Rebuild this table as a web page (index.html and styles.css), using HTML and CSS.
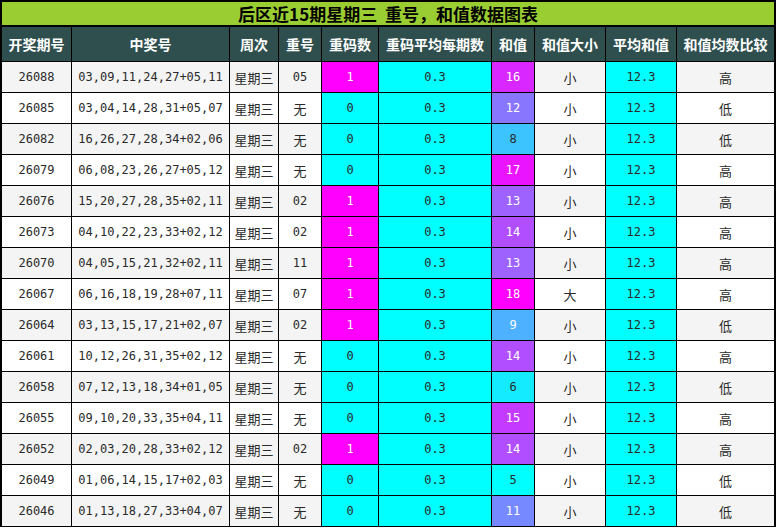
FILE: index.html
```html
<!DOCTYPE html>
<html lang="zh">
<head>
<meta charset="utf-8">
<title>后区近15期星期三 重号，和值数据图表</title>
<link rel="stylesheet" href="styles.css">
</head>
<body>
<div class="sheet">
  <div class="title">后区近15期星期三&nbsp;&nbsp;重号，和值数据图表</div>
  <div class="th">开奖期号</div><div class="th">中奖号</div><div class="th">周次</div><div class="th">重号</div><div class="th">重码数</div><div class="th">重码平均每期数</div><div class="th">和值</div><div class="th">和值大小</div><div class="th">平均和值</div><div class="th">和值均数比较</div>

  <div class="td num g">26088</div><div class="td num g">03,09,11,24,27+05,11</div><div class="td cjk g">星期三</div><div class="td num g">05</div><div class="td num mag">1</div><div class="td num cyan">0.3</div><div class="td num lt" style="background:#d827ff">16</div><div class="td cjk g">小</div><div class="td num cyan">12.3</div><div class="td cjk g">高</div>

  <div class="td num">26085</div><div class="td num">03,04,14,28,31+05,07</div><div class="td cjk">星期三</div><div class="td cjk">无</div><div class="td num cyan">0</div><div class="td num cyan">0.3</div><div class="td num lt" style="background:#8976ff">12</div><div class="td cjk">小</div><div class="td num cyan">12.3</div><div class="td cjk">低</div>

  <div class="td num g">26082</div><div class="td num g">16,26,27,28,34+02,06</div><div class="td cjk g">星期三</div><div class="td cjk g">无</div><div class="td num cyan">0</div><div class="td num cyan">0.3</div><div class="td num" style="background:#3bc4ff">8</div><div class="td cjk g">小</div><div class="td num cyan">12.3</div><div class="td cjk g">低</div>

  <div class="td num">26079</div><div class="td num">06,08,23,26,27+05,12</div><div class="td cjk">星期三</div><div class="td cjk">无</div><div class="td num cyan">0</div><div class="td num cyan">0.3</div><div class="td num lt" style="background:#eb14ff">17</div><div class="td cjk">小</div><div class="td num cyan">12.3</div><div class="td cjk">高</div>

  <div class="td num g">26076</div><div class="td num g">15,20,27,28,35+02,11</div><div class="td cjk g">星期三</div><div class="td num g">02</div><div class="td num mag">1</div><div class="td num cyan">0.3</div><div class="td num lt" style="background:#9d62ff">13</div><div class="td cjk g">小</div><div class="td num cyan">12.3</div><div class="td cjk g">高</div>

  <div class="td num">26073</div><div class="td num">04,10,22,23,33+02,12</div><div class="td cjk">星期三</div><div class="td num">02</div><div class="td num mag">1</div><div class="td num cyan">0.3</div><div class="td num lt" style="background:#b14eff">14</div><div class="td cjk">小</div><div class="td num cyan">12.3</div><div class="td cjk">高</div>

  <div class="td num g">26070</div><div class="td num g">04,05,15,21,32+02,11</div><div class="td cjk g">星期三</div><div class="td num g">11</div><div class="td num mag">1</div><div class="td num cyan">0.3</div><div class="td num lt" style="background:#9d62ff">13</div><div class="td cjk g">小</div><div class="td num cyan">12.3</div><div class="td cjk g">高</div>

  <div class="td num">26067</div><div class="td num">06,16,18,19,28+07,11</div><div class="td cjk">星期三</div><div class="td num">07</div><div class="td num mag">1</div><div class="td num cyan">0.3</div><div class="td num lt" style="background:#ff00ff">18</div><div class="td cjk">大</div><div class="td num cyan">12.3</div><div class="td cjk">高</div>

  <div class="td num g">26064</div><div class="td num g">03,13,15,17,21+02,07</div><div class="td cjk g">星期三</div><div class="td num g">02</div><div class="td num mag">1</div><div class="td num cyan">0.3</div><div class="td num lt" style="background:#4eb1ff">9</div><div class="td cjk g">小</div><div class="td num cyan">12.3</div><div class="td cjk g">低</div>

  <div class="td num">26061</div><div class="td num">10,12,26,31,35+02,12</div><div class="td cjk">星期三</div><div class="td cjk">无</div><div class="td num cyan">0</div><div class="td num cyan">0.3</div><div class="td num lt" style="background:#b14eff">14</div><div class="td cjk">小</div><div class="td num cyan">12.3</div><div class="td cjk">高</div>

  <div class="td num g">26058</div><div class="td num g">07,12,13,18,34+01,05</div><div class="td cjk g">星期三</div><div class="td cjk g">无</div><div class="td num cyan">0</div><div class="td num cyan">0.3</div><div class="td num" style="background:#14ebff">6</div><div class="td cjk g">小</div><div class="td num cyan">12.3</div><div class="td cjk g">低</div>

  <div class="td num">26055</div><div class="td num">09,10,20,33,35+04,11</div><div class="td cjk">星期三</div><div class="td cjk">无</div><div class="td num cyan">0</div><div class="td num cyan">0.3</div><div class="td num lt" style="background:#c43bff">15</div><div class="td cjk">小</div><div class="td num cyan">12.3</div><div class="td cjk">高</div>

  <div class="td num g">26052</div><div class="td num g">02,03,20,28,33+02,12</div><div class="td cjk g">星期三</div><div class="td num g">02</div><div class="td num mag">1</div><div class="td num cyan">0.3</div><div class="td num lt" style="background:#b14eff">14</div><div class="td cjk g">小</div><div class="td num cyan">12.3</div><div class="td cjk g">高</div>

  <div class="td num">26049</div><div class="td num">01,06,14,15,17+02,03</div><div class="td cjk">星期三</div><div class="td cjk">无</div><div class="td num cyan">0</div><div class="td num cyan">0.3</div><div class="td num" style="background:#00ffff">5</div><div class="td cjk">小</div><div class="td num cyan">12.3</div><div class="td cjk">低</div>

  <div class="td num g">26046</div><div class="td num g">01,13,18,27,33+04,07</div><div class="td cjk g">星期三</div><div class="td cjk g">无</div><div class="td num cyan">0</div><div class="td num cyan">0.3</div><div class="td num lt" style="background:#7689ff">11</div><div class="td cjk g">小</div><div class="td num cyan">12.3</div><div class="td cjk g">低</div>
</div>
</body>
</html>
```

FILE: styles.css
```css
html, body {
  margin: 0;
  padding: 0;
  background: #ffffff;
}

.sheet {
  display: grid;
  grid-template-columns: 69px 157px 48px 42px 56px 112px 42px 70px 70px 97px;
  grid-template-rows: 24px 34px;
  grid-auto-rows: 30px;
  gap: 1px;
  padding: 2px 2px 1px 2px;
  background: #000000;
  width: 772px;
  font-family: "Noto Sans CJK SC", sans-serif;
}

.title {
  grid-column: 1 / -1;
  margin-bottom: 1px;
  background: #9acd32;
  color: #000000;
  font-weight: bold;
  font-size: 17px;
  display: flex;
  align-items: center;
  justify-content: center;
  line-height: 1;
}

.th {
  background: #2f4f4f;
  color: #ffffff;
  font-weight: bold;
  font-size: 14px;
  display: flex;
  align-items: center;
  justify-content: center;
  white-space: nowrap;
}

.td {
  background: #ffffff;
  color: #2a2a2a;
  display: flex;
  align-items: center;
  justify-content: center;
  white-space: nowrap;
}

.td.g {
  background: #f4f4f4;
}

.num {
  font-family: "DejaVu Sans Mono", monospace;
  font-size: 12px;
}

.cjk {
  font-size: 13px;
  padding-top: 1px;
}

.cyan {
  background: #00ffff;
}

.td.mag {
  background: #ff00ff;
  color: #ffffff;
}

.td.lt {
  color: #ffffff;
}
```
